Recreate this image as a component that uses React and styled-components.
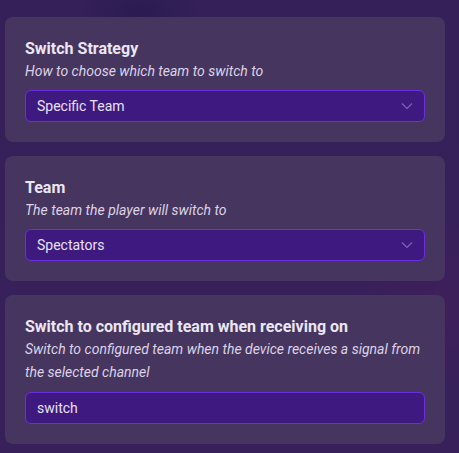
import React from "react";
import styled, { createGlobalStyle } from "styled-components";

const Global = createGlobalStyle`
  html, body { margin: 0; padding: 0; }
  body {
    background: #37225a;
    font-family: Roboto, "Noto Sans", sans-serif;
    width: 459px;
    height: 453px;
    overflow: hidden;
  }
`;

const Page = styled.div`
  width: 459px;
  height: 453px;
  box-sizing: border-box;
  padding: 17px 14px 0 5px;
  display: flex;
  flex-direction: column;
  gap: 14px;
  background:
    radial-gradient(circle at 140px 20px, rgba(30, 20, 70, 0.5), transparent 60px),
    radial-gradient(circle at 440px 300px, rgba(70, 30, 90, 0.5), transparent 90px),
    linear-gradient(180deg, #35205a 0%, #38215b 100%);
`;

const Card = styled.section`
  background: #46355f;
  border-radius: 8px;
  padding: 20px;
  display: flex;
  flex-direction: column;
`;

const Title = styled.div`
  color: #ece6f2;
  font-size: 16px;
  font-weight: 700;
  line-height: 23px;
`;

const Desc = styled.div`
  color: #dcd3e6;
  font-size: 14px;
  font-style: italic;
  line-height: 23px;
  margin-bottom: ${(p) => (p.$multi ? 8 : 7)}px;
`;

const Field = styled.div`
  height: 32px;
  box-sizing: border-box;
  border: 1px solid #6b2fdc;
  border-radius: 6px;
  background: #3e1a80;
  display: flex;
  align-items: center;
  justify-content: space-between;
  padding: 0 11px;
  color: #e8e0f5;
  font-size: 14px;
`;

const Chevron = () => (
  <svg width="12" height="8" viewBox="0 0 12 8" fill="none">
    <path d="M1 1.5 L6 6.5 L11 1.5" stroke="#7d62b5" strokeWidth="1.2" />
  </svg>
);

export default function App() {
  return (
    <>
      <Global />
      <Page>
        <Card>
          <Title>Switch Strategy</Title>
          <Desc>How to choose which team to switch to</Desc>
          <Field>
            <span>Specific Team</span>
            <Chevron />
          </Field>
        </Card>
        <Card>
          <Title>Team</Title>
          <Desc>The team the player will switch to</Desc>
          <Field>
            <span>Spectators</span>
            <Chevron />
          </Field>
        </Card>
        <Card>
          <Title>Switch to configured team when receiving on</Title>
          <Desc $multi>Switch to configured team when the device receives a signal from the selected channel</Desc>
          <Field>
            <span>switch</span>
          </Field>
        </Card>
      </Page>
    </>
  );
}
